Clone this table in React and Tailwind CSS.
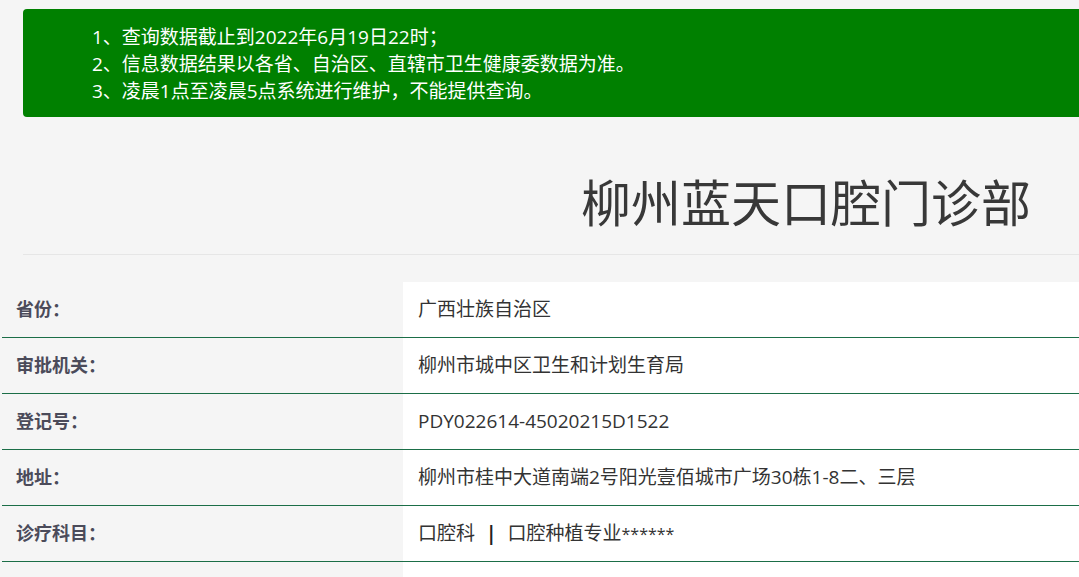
const notes = [
  '1、查询数据截止到2022年6月19日22时；',
  '2、信息数据结果以各省、自治区、直辖市卫生健康委数据为准。',
  '3、凌晨1点至凌晨5点系统进行维护，不能提供查询。',
]

const rows = [
  { label: '省份：', value: '广西壮族自治区' },
  { label: '审批机关：', value: '柳州市城中区卫生和计划生育局' },
  { label: '登记号：', value: 'PDY022614-45020215D1522' },
  { label: '地址：', value: '柳州市桂中大道南端2号阳光壹佰城市广场30栋1-8二、三层' },
  {
    label: '诊疗科目：',
    value: (
      <>
        口腔科
        <span className="mx-[11px] font-bold text-[#222]">|</span>
        口腔种植专业<span className="text-[16px]">******</span>
      </>
    ),
  },
  { label: '', value: '' },
]

export default function App() {
  return (
    <div
      className="h-[577px] overflow-hidden bg-[#f5f5f5] pt-[9px]"
      style={{ fontFamily: '"Open Sans", "Noto Sans CJK SC", sans-serif' }}
    >
      <div className="ml-[23px] h-[108px] rounded-l-[4px] bg-[#008000] pl-[69px] pt-[15px] text-[19px] leading-[27px] text-white">
        {notes.map((n) => (
          <div key={n}>{n}</div>
        ))}
      </div>

      <div className="ml-[23px] flex h-[138px] items-center justify-end border-b border-[#e6e6e6] pr-[48px] pt-[34px]">
        <h1 className="text-[50px] leading-none font-normal text-[#383838]">柳州蓝天口腔门诊部</h1>
      </div>

      <div className="mt-[27px] ml-[2px]">
        {rows.map((r, i) => (
          <div key={i} className="flex h-[56px] border-b border-[#1b6e47]">
            <div className="flex w-[401px] items-center pl-[14px] text-[18px] font-bold text-[#4b4b5a]">
              {r.label}
            </div>
            <div className="flex flex-1 items-center bg-white pl-[15px] text-[19px] text-[#333]">
              {r.value}
            </div>
          </div>
        ))}
      </div>
    </div>
  )
}
